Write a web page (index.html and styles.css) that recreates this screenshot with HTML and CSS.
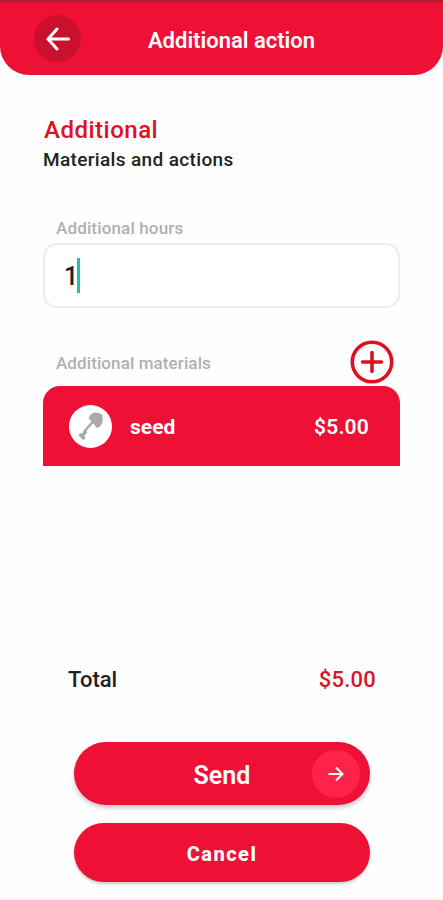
FILE: index.html
```html
<!DOCTYPE html>
<html lang="en">
<head>
<meta charset="UTF-8">
<meta name="viewport" content="width=device-width, initial-scale=1.0">
<title>Additional action</title>
<link rel="stylesheet" href="styles.css">
</head>
<body>
<header class="header">
    <button class="back-btn" type="button">
        <svg width="24" height="24" viewBox="0 0 24 24" fill="none" stroke="#fff" stroke-width="3" stroke-linecap="round">
            <path d="M11 2 L2 12 L11 22 M2 12 H22.500"/>
        </svg>
    </button>
    <h1 class="header-title">Additional action</h1>
</header>

<main class="content">
    <h2 class="title">Additional</h2>
    <p class="subtitle">Materials and actions</p>

    <div class="field-label">Additional hours</div>
    <div class="hours-field"><span class="hours-value">1</span><span class="cursor"></span></div>

    <div class="materials-head">
        <span class="materials-label">Additional materials</span>
        <button class="add-btn" type="button">
            <svg width="44" height="44" viewBox="0 0 44 44" fill="none" stroke="#de0f20">
                <circle cx="22" cy="22" r="19.7" stroke-width="3.6"/>
                <path d="M22 12.500 V31.500 M12.500 22 H31.500" stroke-width="3.6" stroke-linecap="round"/>
            </svg>
        </button>
    </div>
    <div class="material">
        <span class="material-icon">
            <svg width="43" height="43" viewBox="0 0 43 43">
                <path d="M19.500 13 Q21.500 7.500 27 7.500 Q31 7.500 33.500 10 Q34 13 33.500 17 Q32 22 28 23 L24 18.500 L16 27.500 L14 26 L22.500 16.500 Z" fill="#aaa"/>
                <path d="M10.500 29 L15.500 34 M13 31.500 L17 26" stroke="#aaa" stroke-width="3.4"/>
            </svg>
        </span>
        <span class="material-name">seed</span>
        <span class="material-price">$5.00</span>
    </div>

    <div class="total">
        <span>Total</span>
        <span class="total-price">$5.00</span>
    </div>

    <div class="buttons">
        <button class="send-btn" type="button">
            <span class="send-text">Send</span>
            <span class="send-icon">
                <svg width="16" height="16" viewBox="0 0 16 16" fill="none" stroke="#fff" stroke-width="2">
                    <path d="M8 1.500 L14.500 8 L8 14.500 M14.500 8 H0.500"/>
                </svg>
            </span>
        </button>
        <button class="cancel-btn" type="button">Cancel</button>
    </div>
</main>
</body>
</html>
```

FILE: styles.css
```css
* {
  box-sizing: border-box;
}
body {
  margin: 0;
  height: 900px;
  overflow: hidden;
  background-color: #fefefe;
  border-bottom: 2px solid #f6f6f6;
  font-family: Roboto, 'Liberation Sans', sans-serif;
  font-weight: 500;
  color: #222;
}
button {
  border: none;
  padding: 0;
  font-family: inherit;
  color: #fff;
}
.header {
  display: grid;
  grid-template-columns: 47px 1fr 47px;
  align-items: center;
  height: 75px;
  padding: 0 14px 0 34px;
  background-color: #ef1035;
  border-top: 2px solid #a52438;
  border-radius: 0 0 29px 29px;
}
.back-btn {
  display: flex;
  align-items: center;
  justify-content: center;
  width: 47px;
  height: 47px;
  border-radius: 50%;
  background-color: #cb102e;
}
.header-title {
  margin: 5px 0 0;
  text-align: center;
  font-size: 22px;
  line-height: 26px;
  font-weight: 600;
  color: #fff;
}
.content {
  padding: 41px 43px 0;
}
.title {
  margin: 0;
  padding-left: 1px;
  font-size: 24px;
  line-height: 28px;
  font-weight: 500;
  letter-spacing: 0.5px;
  color: #e01024;
}
.subtitle {
  margin: 4px 0 0;
  font-size: 19px;
  line-height: 24px;
  letter-spacing: 0.35px;
}
.field-label {
  margin-top: 45px;
  padding-left: 13px;
  font-size: 17px;
  line-height: 22px;
  letter-spacing: 0.15px;
  color: #b0b0b0;
}
.hours-field {
  display: flex;
  align-items: center;
  height: 65px;
  margin-top: 4px;
  padding-left: 19px;
  border: 2px solid #ececec;
  border-radius: 14px;
  background-color: #fff;
}
.hours-value {
  width: 13px;
  padding-top: 2px;
  font-size: 25px;
}
.cursor {
  width: 3px;
  height: 35px;
  background-color: #20c4a8;
}
.materials-head {
  display: flex;
  align-items: center;
  justify-content: space-between;
  height: 44px;
  margin-top: 32px;
  padding: 0 6px 0 13px;
}
.materials-label {
  padding-top: 2px;
  font-size: 17px;
  letter-spacing: 0.1px;
  color: #b0b0b0;
}
.add-btn {
  height: 44px;
  background: none;
}
.material {
  display: flex;
  align-items: center;
  height: 80px;
  margin-top: 2px;
  padding: 0 31px 0 26px;
  background-color: #ef1035;
  border-radius: 17px 17px 0 0;
  font-size: 21px;
  font-weight: 700;
  color: #fff;
}
.material-icon {
  width: 43px;
  height: 43px;
  border-radius: 50%;
  background-color: #fff;
}
.material-name {
  margin-left: 18px;
  padding-top: 2px;
}
.material-price {
  margin-left: auto;
  padding-top: 2px;
  font-weight: 600;
  letter-spacing: 0.2px;
}
.total {
  display: flex;
  justify-content: space-between;
  margin-top: 200px;
  padding: 0 24px 0 25px;
  font-size: 22px;
  line-height: 28px;
}
.total-price {
  letter-spacing: 0.2px;
  color: #d3162a;
}
.buttons {
  margin-top: 48px;
  padding: 0 30px 0 31px;
}
.send-btn,
.cancel-btn {
  display: block;
  width: 100%;
  border-radius: 32px;
  background-color: #ef1035;
}
.send-btn {
  display: grid;
  grid-template-columns: 48px 1fr 48px;
  align-items: center;
  height: 63px;
  padding: 0 10px;
  font-size: 25px;
  font-weight: 600;
  box-shadow: 0 3px 4px rgba(0, 0, 0, 0.2);
}
.send-text {
  grid-column: 2;
  padding-top: 3px;
}
.send-icon {
  display: flex;
  align-items: center;
  justify-content: center;
  width: 48px;
  height: 48px;
  border-radius: 50%;
  background-color: #ff234a;
}
.cancel-btn {
  height: 59px;
  margin-top: 18px;
  padding-top: 2px;
  font-size: 20px;
  font-weight: 800;
  letter-spacing: 1.5px;
  box-shadow: 0 2px 3px rgba(0, 0, 0, 0.2);
}
```
